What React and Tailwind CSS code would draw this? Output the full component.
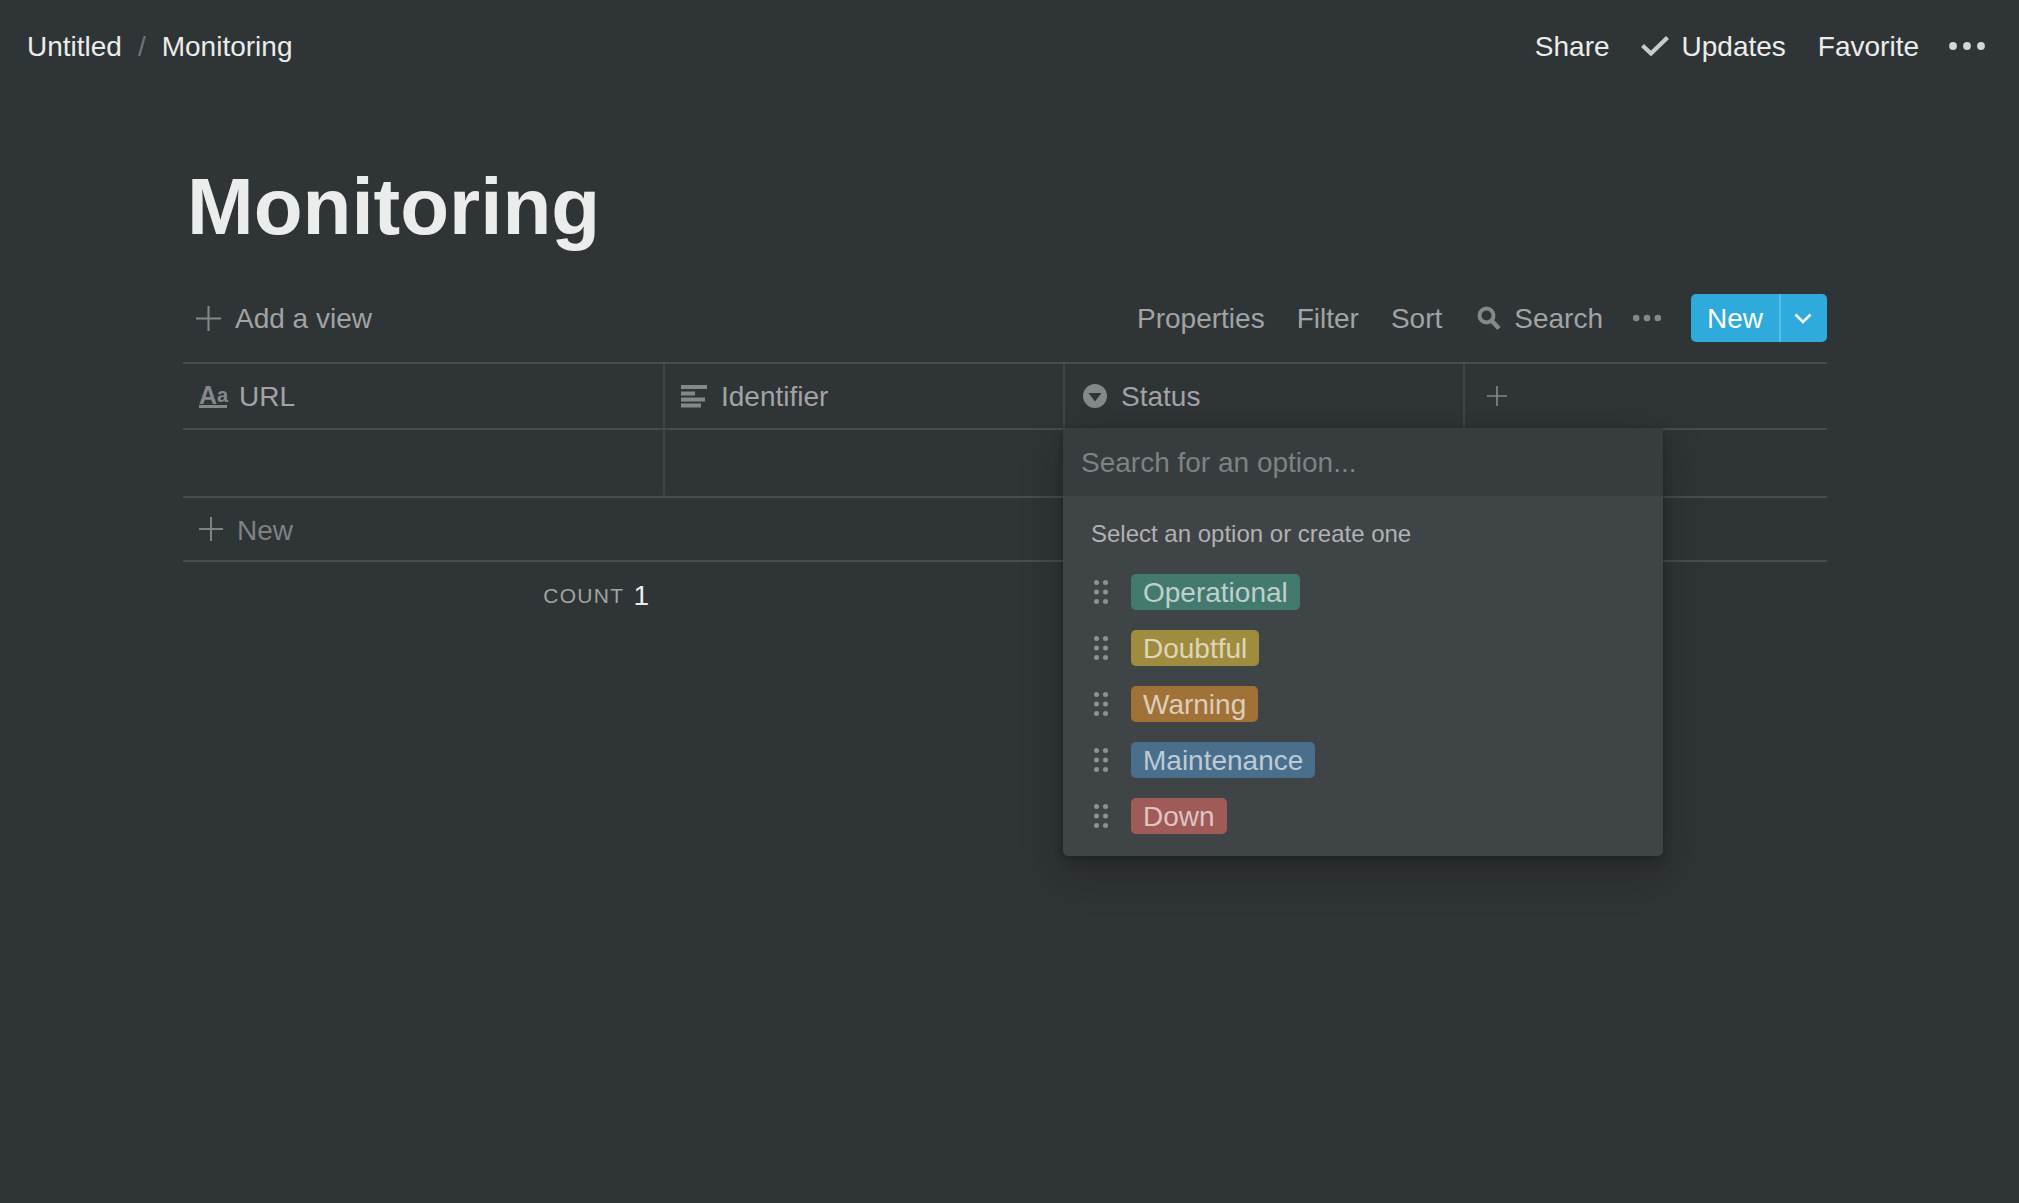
import React from 'react';

const OPTIONS = [
  { name: 'Operational', className: 'bg-[#447a6e] text-[#bdd0cb]' },
  { name: 'Doubtful', className: 'bg-[#a08c3f] text-[#ddd6ba]' },
  { name: 'Warning', className: 'bg-[#a07238] text-[#ddcdba]' },
  { name: 'Maintenance', className: 'bg-[#4a6f8c] text-[#bdcbd6]' },
  { name: 'Down', className: 'bg-[#a05a57] text-[#ddc5c4]' },
];

const PlusIcon = ({ className }) => (
  <svg viewBox="0 0 24 24" className={className} fill="none" stroke="currentColor" strokeWidth="2">
    <path d="M12 0V24M0 12H24" />
  </svg>
);

const Dots = ({ className, r = 3.4 }) => (
  <svg viewBox="0 0 36 8" className={className} fill="currentColor">
    <circle cx="4" cy="4" r={r} />
    <circle cx="18" cy="4" r={r} />
    <circle cx="32" cy="4" r={r} />
  </svg>
);

const DragHandle = () => (
  <svg viewBox="0 0 14 24" className="w-[14px] h-[24px] text-[#8e9193]" fill="currentColor">
    <circle cx="2.5" cy="2.5" r="2.5" />
    <circle cx="11.5" cy="2.5" r="2.5" />
    <circle cx="2.5" cy="12" r="2.5" />
    <circle cx="11.5" cy="12" r="2.5" />
    <circle cx="2.5" cy="21.5" r="2.5" />
    <circle cx="11.5" cy="21.5" r="2.5" />
  </svg>
);

function ColumnHead({ icon, label, className }) {
  return (
    <div className={`flex items-center h-full border-r-2 border-[#3f4447] ${className}`}>
      {icon}
      <span className="pt-[2px] text-[#a1a3a5]">{label}</span>
    </div>
  );
}

function StatusMenu() {
  return (
    <div className="absolute z-10 top-full left-[-2px] w-[600px] h-[428px] bg-[#3f4447] rounded-b-[5px] shadow-[0_0_0_2px_rgba(15,15,15,0.05),0_5px_10px_rgba(15,15,15,0.2),0_16px_42px_rgba(15,15,15,0.3)]">
      <div className="h-[68px] flex items-center pl-[18px] pt-[2px] bg-[#373c3f] text-[#7e8284]">
        Search for an option...
      </div>
      <div className="pt-[20px] pl-[28px] text-[24px] leading-[36px] text-[#b0b2b3]">Select an option or create one</div>
      <div className="mt-[22px] flex flex-col gap-[20px]">
        {OPTIONS.map((option) => (
          <div key={option.name} className="flex items-center h-[36px] pl-[31px]">
            <DragHandle />
            <span className={`ml-[23px] h-[36px] leading-[37px] px-3 rounded-[5px] ${option.className}`}>
              {option.name}
            </span>
          </div>
        ))}
      </div>
    </div>
  );
}

export default function App() {
  return (
    <div className="min-h-[1203px] bg-[#2f3437] text-[28px] font-['Liberation_Sans',Arial,sans-serif] text-[#ebecec]">
      <header className="h-[92px] flex items-center justify-between pl-[27px] pr-[34px]">
        <div className="flex items-center pt-[2px]">
          <span>Untitled</span>
          <span className="mx-[16px] text-[#71757a]">/</span>
          <span>Monitoring</span>
        </div>
        <div className="flex items-center">
          <span className="pt-[2px]">Share</span>
          <svg viewBox="0 0 28 20" className="ml-[31px] w-[28px] h-[20px] text-[#c9cacb]" fill="none" stroke="currentColor" strokeWidth="4.2">
            <path d="M1.5 9.5L10 17.5L26.5 1.5" />
          </svg>
          <span className="ml-[13px] pt-[2px]">Updates</span>
          <span className="ml-[32px] pt-[2px]">Favorite</span>
          <Dots className="ml-[30px] w-[36px] h-[8px] text-[#d4d5d6]" r={3.9} />
        </div>
      </header>

      <main className="ml-[183px] w-[1644px]">
        <h1 className="mt-[69px] pl-[4px] text-[80px] leading-[92px] font-bold text-[#ebecec]">Monitoring</h1>

        <div className="mt-[41px] h-[48px] flex items-center justify-between text-[#a1a3a5]">
          <div className="flex items-center pl-[13px]">
            <PlusIcon className="w-[25px] h-[25px] text-[#85888b]" />
            <span className="ml-[14px] pt-[2px]">Add a view</span>
          </div>
          <div className="flex items-center">
            <span className="pt-[2px]">Properties</span>
            <span className="ml-[32px] pt-[2px]">Filter</span>
            <span className="ml-[32px] pt-[2px]">Sort</span>
            <svg viewBox="0 0 24 24" className="ml-[35px] w-[24px] h-[24px] text-[#85888b]" fill="none" stroke="currentColor">
              <circle cx="9.5" cy="9.5" r="7" strokeWidth="4" />
              <path d="M14.5 14.5L22 22.5" strokeWidth="4.4" />
            </svg>
            <span className="ml-[13px] pt-[2px]">Search</span>
            <Dots className="ml-[30px] w-[28px] h-[8px] text-[#85888b]" r={4.3} />
            <div className="ml-[30px] h-[48px] flex items-center rounded-[5px] bg-[#2eaadc] text-white">
              <span className="h-full flex items-center pl-[16px] pr-[16px] pt-[2px] border-r-2 border-[#57bbe3]">New</span>
              <svg viewBox="0 0 18 11" className="ml-[13px] mr-[15px] w-[18px] h-[11px]" fill="none" stroke="currentColor" strokeWidth="2.6">
                <path d="M1.5 1.5L9 9L16.5 1.5" />
              </svg>
            </div>
          </div>
        </div>

        <div className="mt-[20px] border-t-2 border-[#474c4f]">
          <div className="h-[66px] flex items-center border-b-2 border-[#474c4f]">
            <ColumnHead
              className="w-[482px] pl-[16px]"
              label="URL"
              icon={
                <div className="mr-[12px] w-[28px] h-[23px] flex items-end pb-[1px] border-b-[3px] border-[#85888b] font-bold text-[#85888b] leading-[18px]">
                  <span className="text-[25px]">A</span>
                  <span className="text-[20px]">a</span>
                </div>
              }
            />
            <ColumnHead
              className="w-[400px] pl-[16px]"
              label="Identifier"
              icon={
                <svg viewBox="0 0 26 23" className="mr-[14px] w-[26px] h-[23px] text-[#85888b]" fill="currentColor">
                  <rect x="0" y="0" width="26" height="4" />
                  <rect x="0" y="6.5" width="14" height="4" />
                  <rect x="0" y="12.5" width="24" height="4" />
                  <rect x="0" y="18.5" width="20" height="4" />
                </svg>
              }
            />
            <div className="relative h-full w-[400px]">
              <ColumnHead
                className="pl-[18px]"
                label="Status"
                icon={
                  <svg viewBox="0 0 24 24" className="mr-[14px] w-[24px] h-[24px] text-[#85888b]">
                    <path fillRule="evenodd" fill="currentColor" d="M12 0a12 12 0 1 0 0 24a12 12 0 1 0 0-24ZM5.5 9H18.5L12 17.5Z" />
                  </svg>
                }
              />
              <StatusMenu />
            </div>
            <PlusIcon className="ml-[22px] w-[20px] h-[20px] text-[#85888b]" />
          </div>

          <div className="h-[68px] border-b-2 border-[#474c4f] flex">
            <div className="w-[482px] h-[65px] border-r-2 border-[#3f4447]" />
          </div>

          <div className="h-[64px] flex items-center pl-[16px] border-b-2 border-[#474c4f] text-[#7e8284]">
            <PlusIcon className="w-[24px] h-[24px]" />
            <span className="ml-[14px] pt-[4px]">New</span>
          </div>

          <div className="w-[482px] h-[66px] flex items-center justify-end pr-[16px] pt-[2px]">
            <span className="text-[21px] tracking-[1.3px] uppercase text-[#a1a3a5]">Count</span>
            <span className="ml-[9px] text-[#ebecec]">1</span>
          </div>
        </div>
      </main>
    </div>
  );
}
